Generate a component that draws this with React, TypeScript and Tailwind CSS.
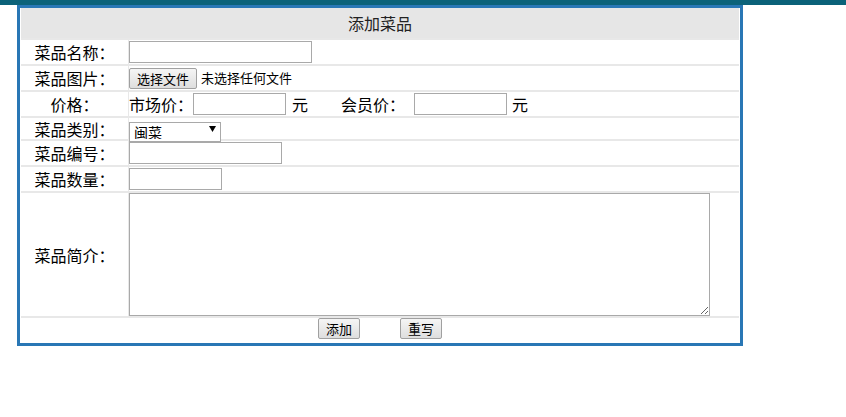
export default function App() {
  const label = 'flex items-center justify-center bg-white text-[16px] text-black';
  const cell = 'flex items-center bg-white text-[16px] text-black';
  const input = 'h-[22px] border border-[#a9a9a9] bg-white px-1 text-[13px] outline-none';
  const btn =
    'h-[21px] rounded-[2px] border border-[#a0a0a0] bg-linear-to-b from-[#f5f5f5] to-[#dedede] text-[13px] leading-none text-black';

  return (
    <div className="min-h-screen bg-white font-['Noto_Sans_CJK_SC','Liberation_Sans',sans-serif]">
      <div className="h-[5px] bg-[#0b6279]" />

      <div className="ml-[17px] w-[726px] border-[3px] border-[#2977b5] bg-white px-px pb-px">
        <div className="grid grid-cols-[107px_1fr] gap-x-px gap-y-[2px] bg-[#e8e8e8]">
          {/* title */}
          <div className="col-span-2 flex h-[30px] items-center justify-center bg-[#e6e6e6] text-[16px] text-[#222]">
            添加菜品
          </div>

          {/* name */}
          <div className={`${label} h-[24px]`}>菜品名称：</div>
          <div className={cell}>
            <input className={`${input} w-[183px]`} />
          </div>

          {/* picture */}
          <div className={`${label} h-[24px]`}>菜品图片：</div>
          <div className={cell}>
            <button className={`${btn} w-[68px]`}>选择文件</button>
            <span className="ml-[4px] text-[13px]">未选择任何文件</span>
          </div>

          {/* price */}
          <div className={`${label} h-[24px]`}>价格：</div>
          <div className={cell}>
            <span>市场价：</span>
            <input className={`${input} w-[93px]`} />
            <span className="ml-[6px]">元</span>
            <span className="ml-[33px]">会员价：</span>
            <input className={`${input} ml-[9px] w-[93px]`} />
            <span className="ml-[5px]">元</span>
          </div>

          {/* category */}
          <div className={`${label} h-[21px]`}>菜品类别：</div>
          <div className={cell}>
            <div className="relative h-[20px] w-[92px]">
              <select className="h-full w-full appearance-none border border-[#a9a9a9] bg-white pl-[4px] text-[14px] leading-none outline-none">
                <option>闽菜</option>
                <option>川菜</option>
                <option>粤菜</option>
                <option>鲁菜</option>
              </select>
              <svg className="pointer-events-none absolute right-[5px] top-[7px]" width="7" height="6" viewBox="0 0 7 6">
                <path d="M0 0H7L3.5 6Z" fill="#000" />
              </svg>
            </div>
          </div>

          {/* number */}
          <div className={`${label} h-[24px]`}>菜品编号：</div>
          <div className={cell}>
            <input className={`${input} w-[153px]`} />
          </div>

          {/* quantity */}
          <div className={`${label} h-[24px]`}>菜品数量：</div>
          <div className={cell}>
            <input className={`${input} w-[93px]`} />
          </div>

          {/* intro */}
          <div className={`${label} h-[123px]`}>菜品简介：</div>
          <div className={cell}>
            <textarea className="h-[123px] w-[581px] resize border border-[#a9a9a9] bg-white text-[13px] outline-none" />
          </div>

          {/* actions */}
          <div className="col-span-2 flex h-[24px] items-start justify-center gap-[40px] bg-white">
            <button className={`${btn} w-[42px]`}>添加</button>
            <button className={`${btn} w-[42px]`}>重写</button>
          </div>
        </div>
      </div>
    </div>
  );
}
